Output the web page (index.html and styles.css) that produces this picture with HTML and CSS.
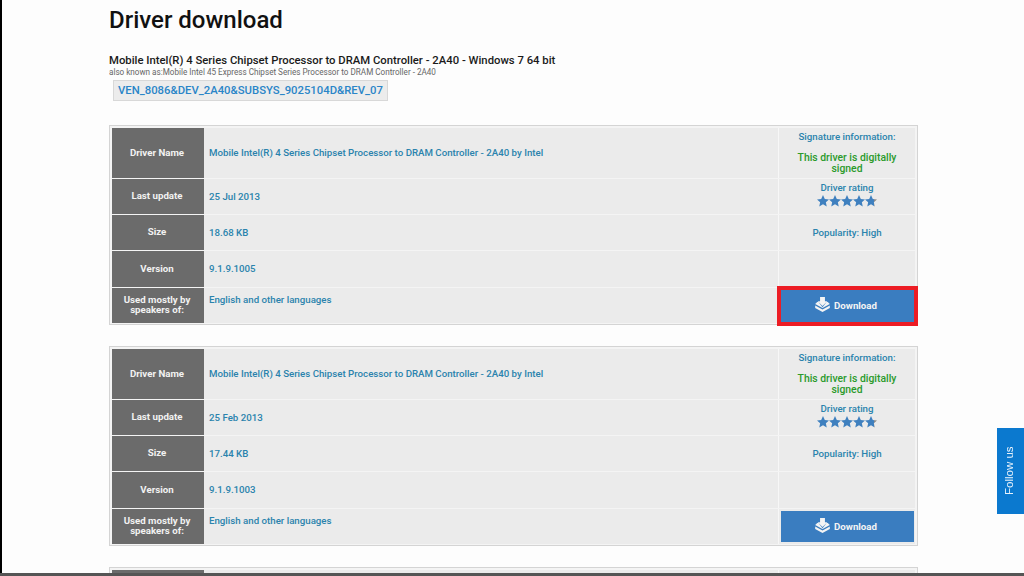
FILE: index.html
```html
<!DOCTYPE html>
<html lang="en">
<head>
<meta charset="utf-8">
<title>Driver download</title>
<link rel="stylesheet" href="styles.css">
</head>
<body>
<svg class="defs" width="0" height="0" aria-hidden="true">
  <defs>
    <linearGradient id="part"><stop offset="72%" stop-color="#3f80bf"/><stop offset="72%" stop-color="#8a8a8a"/></linearGradient>
  </defs>
  <symbol id="star" viewBox="0 0 24 24"><path d="M12 0l3.6 8 8.4 .9-6.3 5.7 1.8 8.4-7.5-4.3-7.5 4.3 1.8-8.4L0 8.9 8.4 8z"/></symbol>
  <symbol id="dl" viewBox="0 0 16 16"><path d="M5.4 0h5.2v4.4h2.6L8 9.6 2.8 4.4h2.6zM2.4 5.4L.2 7.4 8 11.6l7.8-4.2-2.2-2-1.2 0L8 10.8 3.6 5.4zM.2 9v2.6L8 16l7.8-4.4V9L8 13.2z"/></symbol>
</svg>
<main class="page">
  <h1 class="title">Driver download</h1>
  <h2 class="subtitle">Mobile Intel(R) 4 Series Chipset Processor to DRAM Controller - 2A40 - Windows 7 64 bit</h2>
  <p class="aka">also known as:Mobile Intel 45 Express Chipset Series Processor to DRAM Controller - 2A40</p>
  <a class="hwid">VEN_8086&amp;DEV_2A40&amp;SUBSYS_9025104D&amp;REV_07</a>

  <section class="card">
    <div class="label row1">Driver Name</div>
    <div class="value row1">Mobile Intel(R) 4 Series Chipset Processor to DRAM Controller - 2A40 by Intel</div>
    <div class="side row1 sig"><span>Signature information:</span><strong>This driver is digitally signed</strong></div>
    <div class="label row2">Last update</div>
    <div class="value row2">25 Jul 2013</div>
    <div class="side row2 rating"><span>Driver rating</span>
      <span class="stars"><svg><use href="#star"/></svg><svg><use href="#star"/></svg><svg><use href="#star"/></svg><svg><use href="#star"/></svg><svg class="last"><use href="#star"/></svg></span></div>
    <div class="label row3">Size</div>
    <div class="value row3">18.68 KB</div>
    <div class="side row3">Popularity: High</div>
    <div class="label row4">Version</div>
    <div class="value row4">9.1.9.1005</div>
    <div class="side row4"></div>
    <div class="label row5">Used mostly by speakers of:</div>
    <div class="value row5 top">English and other languages</div>
    <div class="side row5 btncell"><a class="btn marked"><svg class="dlicon"><use href="#dl"/></svg>Download</a></div>
  </section>

  <section class="card">
    <div class="label row1">Driver Name</div>
    <div class="value row1">Mobile Intel(R) 4 Series Chipset Processor to DRAM Controller - 2A40 by Intel</div>
    <div class="side row1 sig"><span>Signature information:</span><strong>This driver is digitally signed</strong></div>
    <div class="label row2">Last update</div>
    <div class="value row2">25 Feb 2013</div>
    <div class="side row2 rating"><span>Driver rating</span>
      <span class="stars"><svg><use href="#star"/></svg><svg><use href="#star"/></svg><svg><use href="#star"/></svg><svg><use href="#star"/></svg><svg class="last"><use href="#star"/></svg></span></div>
    <div class="label row3">Size</div>
    <div class="value row3">17.44 KB</div>
    <div class="side row3">Popularity: High</div>
    <div class="label row4">Version</div>
    <div class="value row4">9.1.9.1003</div>
    <div class="side row4"></div>
    <div class="label row5">Used mostly by speakers of:</div>
    <div class="value row5 top">English and other languages</div>
    <div class="side row5 btncell"><a class="btn"><svg class="dlicon"><use href="#dl"/></svg>Download</a></div>
  </section>

  <section class="card">
    <div class="label row1"></div>
    <div class="value row1"></div>
    <div class="side row1"></div>
  </section>
</main>
<a class="follow">Follow us</a>
<div class="taskbar"></div>
</body>
</html>
```

FILE: styles.css
```css
* { box-sizing: border-box; }
html, body { height: 576px; overflow: hidden; }
body {
  margin: 0;
  background: #fdfdfd;
  border-left: 2px solid #000;
  font-family: Roboto, "Liberation Sans", sans-serif;
}
.defs { position: absolute; }
.page { width: 809px; height: 576px; margin-left: 107px; overflow: hidden; }
.title {
  margin: 0;
  padding-top: 6px;
  font-size: 24px;
  line-height: 28px;
  font-weight: 500;
  color: #111;
}
.subtitle {
  margin: 20px 0 0;
  font-size: 11.3px;
  line-height: 14px;
  font-weight: 500;
  color: #1a1a1a;
}
.aka {
  margin: 0;
  font-size: 8.15px;
  line-height: 9px;
  color: #666;
}
.hwid {
  display: block;
  width: 275px;
  height: 21px;
  margin: 3px 0 24px 4px;
  padding-left: 4px;
  background: #ececec;
  border: 1px solid #d8d8d8;
  font-size: 11.3px;
  line-height: 19px;
  font-weight: 500;
  color: #2a85c8;
  white-space: nowrap;
}
.card {
  display: grid;
  grid-template-columns: 92px 1fr 137px;
  grid-template-rows: 50px 35px 35px 36px 35px;
  row-gap: 1px;
  height: 200px;
  margin-bottom: 21px;
  padding: 2px;
  background: #f4f4f4;
  border: 1px solid #d4d4d4;
}
.label {
  display: flex;
  align-items: center;
  justify-content: center;
  padding: 0 8px 1px 6px;
  background: #6b6b6b;
  color: #f2f2f2;
  font-size: 9.7px;
  line-height: 10px;
  font-weight: 700;
  text-align: center;
}
.value {
  display: flex;
  align-items: center;
  padding: 0 0 1px 5px;
  background: #ebebeb;
  color: #2a83ad;
  font-size: 9.7px;
  font-weight: 500;
}
.value.top { align-items: flex-start; padding-top: 6px; }
.side {
  display: flex;
  flex-direction: column;
  align-items: center;
  justify-content: center;
  background: #ebebeb;
  border-left: 1px solid #f7f7f7;
  color: #2a83ad;
  font-size: 9.7px;
  font-weight: 500;
  text-align: center;
}
.sig { justify-content: flex-start; padding-top: 3px; }
.sig span { line-height: 12px; }
.sig strong {
  margin-top: 9px;
  width: 110px;
  font-size: 10.4px;
  line-height: 11px;
  font-weight: 500;
  color: #2a9a2a;
}
.rating { justify-content: flex-start; padding-top: 3px; line-height: 12px; }
.stars { display: flex; margin-top: 1px; }
.stars svg { width: 12px; height: 12px; fill: #3f80bf; }
.stars .last { fill: url(#part); }
.btn {
  display: flex;
  align-items: center;
  justify-content: center;
  gap: 4px;
  width: 133px;
  height: 31px;
  background: #3a7dc0;
  color: #f4f4f4;
  font-size: 9.7px;
  font-weight: 700;
}
.btn.marked { height: 32px; outline: 4px solid #ec1c24; }
.dlicon { width: 15px; height: 15px; margin: -3px 0 0 -2px; fill: #f4f4f4; }
.follow {
  position: fixed;
  right: 0;
  top: 428px;
  width: 27px;
  height: 86px;
  display: flex;
  align-items: center;
  justify-content: center;
  padding-left: 2px;
  background: #0b79cf;
  color: #e8f2fb;
  font-family: "Liberation Sans", sans-serif;
  font-size: 11.5px;
  writing-mode: vertical-rl;
  transform: rotate(180deg);
}
.taskbar {
  position: fixed;
  left: 0;
  right: 0;
  bottom: 0;
  height: 3px;
  background: #555;
}
```
